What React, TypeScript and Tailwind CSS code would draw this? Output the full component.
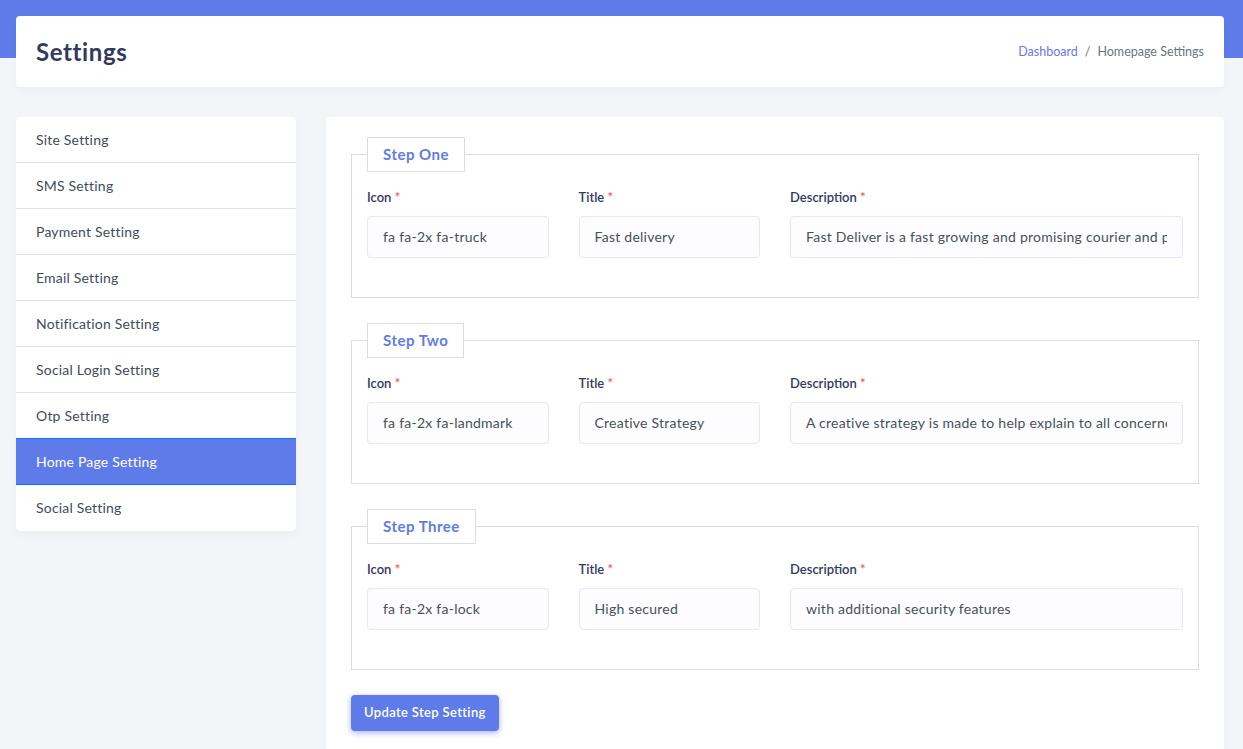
import React from "react";

const menu = [
  "Site Setting",
  "SMS Setting",
  "Payment Setting",
  "Email Setting",
  "Notification Setting",
  "Social Login Setting",
  "Otp Setting",
  "Home Page Setting",
  "Social Setting",
];

const steps = [
  {
    name: "Step One",
    icon: "fa fa-2x fa-truck",
    title: "Fast delivery",
    description:
      "Fast Deliver is a fast growing and promising courier and parcel service in Bangladesh.",
  },
  {
    name: "Step Two",
    icon: "fa fa-2x fa-landmark",
    title: "Creative Strategy",
    description:
      "A creative strategy is made to help explain to all concerned how the delivery works.",
  },
  {
    name: "Step Three",
    icon: "fa fa-2x fa-lock",
    title: "High secured",
    description: "with additional security features",
  },
];

function Field({ label, value, wide }: { label: string; value: string; wide?: boolean }) {
  return (
    <div className={wide ? "col-span-2" : ""}>
      <label className="mb-2 block text-[13px] font-semibold leading-[19.5px] text-[#34395e]">
        {label} <span className="text-[#fc544b]">*</span>
      </label>
      <input
        readOnly
        value={value}
        className="block h-[42px] w-full rounded-[4px] border border-[#e4e6fc] bg-[#fdfdff] px-[15px] text-[14px] tracking-[0.25px] text-[#495057] outline-none"
      />
    </div>
  );
}

export default function App() {
  return (
    <div className="min-h-screen bg-[linear-gradient(to_bottom,#5f7be9_58px,#f4f5f9_58px)] pl-4 pr-[19px] pt-4 font-['Lato',sans-serif]">
      <div className="flex h-[71px] items-center justify-between rounded-[4px] bg-white px-5 shadow-[0_4px_8px_rgba(0,0,0,0.03)]">
        <h1 className="text-[24px] font-bold tracking-[0.6px] text-[#34395e]">Settings</h1>
        <div className="flex items-center pt-[2px] text-[12.5px]">
          <span className="text-[#6777ef]">Dashboard</span>
          <span className="px-[7px] text-[#6c757d]">/</span>
          <span className="text-[#6c757d]">Homepage Settings</span>
        </div>
      </div>

      <div className="mt-[30px] grid grid-cols-[280px_1fr] items-start gap-[30px]">
        <div className="overflow-hidden rounded-[4px] bg-white shadow-[0_4px_8px_rgba(0,0,0,0.03)]">
          {menu.map((m, i) => {
            const active = m === "Home Page Setting";
            const last = i === menu.length - 1;
            return (
              <div
                key={m}
                className={
                  active
                    ? "relative -mt-px flex h-[47px] items-center border-y border-[#007bff] bg-[#5f7be9] px-5 text-[14px] tracking-[0.2px] text-white"
                    : `flex h-[46px] items-center px-5 pb-px text-[14px] tracking-[0.2px] text-[#444a5a] ${last ? "" : "border-b border-[#dee2e6]"}`
                }
              >
                {m}
              </div>
            );
          })}
        </div>

        <div className="rounded-[4px] bg-white px-[25px] pb-6 pt-5 shadow-[0_4px_8px_rgba(0,0,0,0.03)]">
          {steps.map((s) => (
            <fieldset key={s.name} className="mb-[25px] border border-[#ddd] px-[15px] pb-[39.5px] pt-[16px]">
              <legend className="h-[35px] border border-[#ddd] px-[15px] text-[15px] font-bold leading-[33px] tracking-[0.5px] text-[#5f7be9]">
                {s.name}
              </legend>
              <div className="grid grid-cols-4 gap-[30px]">
                <Field label="Icon" value={s.icon} />
                <Field label="Title" value={s.title} />
                <Field label="Description" value={s.description} wide />
              </div>
            </fieldset>
          ))}
          <button className="h-9 rounded-[4px] bg-[#5f7be9] px-[13px] text-[13px] font-semibold tracking-[0.35px] text-white shadow-[0_2px_6px_#acb5f6]">
            Update Step Setting
          </button>
        </div>
      </div>
    </div>
  );
}
